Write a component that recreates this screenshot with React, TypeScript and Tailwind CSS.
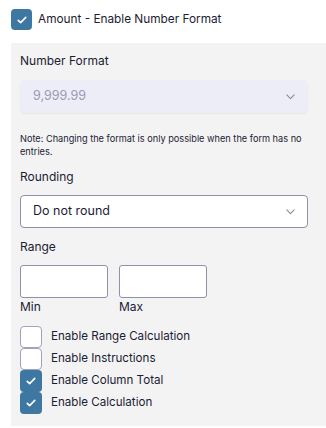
import React from 'react';

const Check = () => (
    <svg viewBox="0 0 16 16" className="w-[12px] h-[12px]" fill="none" stroke="white" strokeWidth="2.2" strokeLinecap="round" strokeLinejoin="round">
        <path d="M3 8.5l3.2 3L13 4.5" />
    </svg>
);

const Chevron = () => (
    <svg viewBox="0 0 16 16" className="w-[13px] h-[13px]" fill="none" stroke="#8a8aa0" strokeWidth="1.4" strokeLinecap="round" strokeLinejoin="round">
        <path d="M3.5 6l4.5 4.5L12.5 6" />
    </svg>
);

const Box = ({ checked }: { checked: boolean }) =>
    checked ? (
        <span className="w-[22px] h-[22px] rounded-[4px] bg-[#3e77a1] flex items-center justify-center shrink-0">
            <Check />
        </span>
    ) : (
        <span className="w-[22px] h-[22px] rounded-[4px] bg-white border border-[#a2a2bc] shrink-0" />
    );

const options = [
    { label: 'Enable Range Calculation', checked: false },
    { label: 'Enable Instructions', checked: false },
    { label: 'Enable Column Total', checked: true },
    { label: 'Enable Calculation', checked: true },
];

export default function App() {
    return (
        <div className="w-[326px] h-[428px] bg-white overflow-hidden text-[#1c1c34]" style={{ fontFamily: 'Inter, "Noto Sans", sans-serif' }}>
            {/* Header toggle */}
            <div className="flex gap-[6px] pl-[11px] pt-[9px] h-[43px] items-start">
                <span className="w-[21px] h-[21px] rounded-[4px] bg-[#3e77a1] flex items-center justify-center">
                    <Check />
                </span>
                <span className="text-[11.8px] leading-[21px]">Amount - Enable Number Format</span>
            </div>

            {/* Settings panel */}
            <div className="ml-[11px] bg-[#f3f3f3] pl-[9px] pr-[18px] pt-[10px] pb-[12px]">
                <div className="text-[12px] leading-[16px]">Number Format</div>
                <div className="mt-[11px] h-[33px] rounded-[5px] bg-[#ededf7] shadow-[0_1px_2px_rgba(0,0,0,0.06)] flex items-center justify-between pl-[13px] pr-[11px]">
                    <span className="text-[12.5px] text-[#9b9bb4]">9,999.99</span>
                    <Chevron />
                </div>
                <p className="mt-[19px] text-[9.2px] leading-[13px]">
                    Note: Changing the format is only possible when the form has no entries.
                </p>

                <div className="mt-[11px] text-[12px] leading-[16px]">Rounding</div>
                <div className="mt-[10px] h-[33px] rounded-[4px] bg-white border border-[#9090ac] flex items-center justify-between pl-[12px] pr-[10px]">
                    <span className="text-[12.5px]">Do not round</span>
                    <Chevron />
                </div>

                <div className="mt-[11px] text-[12px] leading-[16px]">Range</div>
                <div className="mt-[10px] flex gap-[11px]">
                    <div className="w-[88px]">
                        <div className="h-[33px] rounded-[3px] bg-white border border-[#9090ac]" />
                        <div className="mt-[1px] text-[12px] leading-[16px]">Min</div>
                    </div>
                    <div className="w-[88px]">
                        <div className="h-[33px] rounded-[3px] bg-white border border-[#9090ac]" />
                        <div className="mt-[1px] text-[12px] leading-[16px]">Max</div>
                    </div>
                </div>

                <div className="mt-[11px] flex flex-col">
                    {options.map((o) => (
                        <label key={o.label} className="flex items-center gap-[9px] h-[22px]">
                            <Box checked={o.checked} />
                            <span className="text-[11.6px]">{o.label}</span>
                        </label>
                    ))}
                </div>
            </div>
        </div>
    );
}
